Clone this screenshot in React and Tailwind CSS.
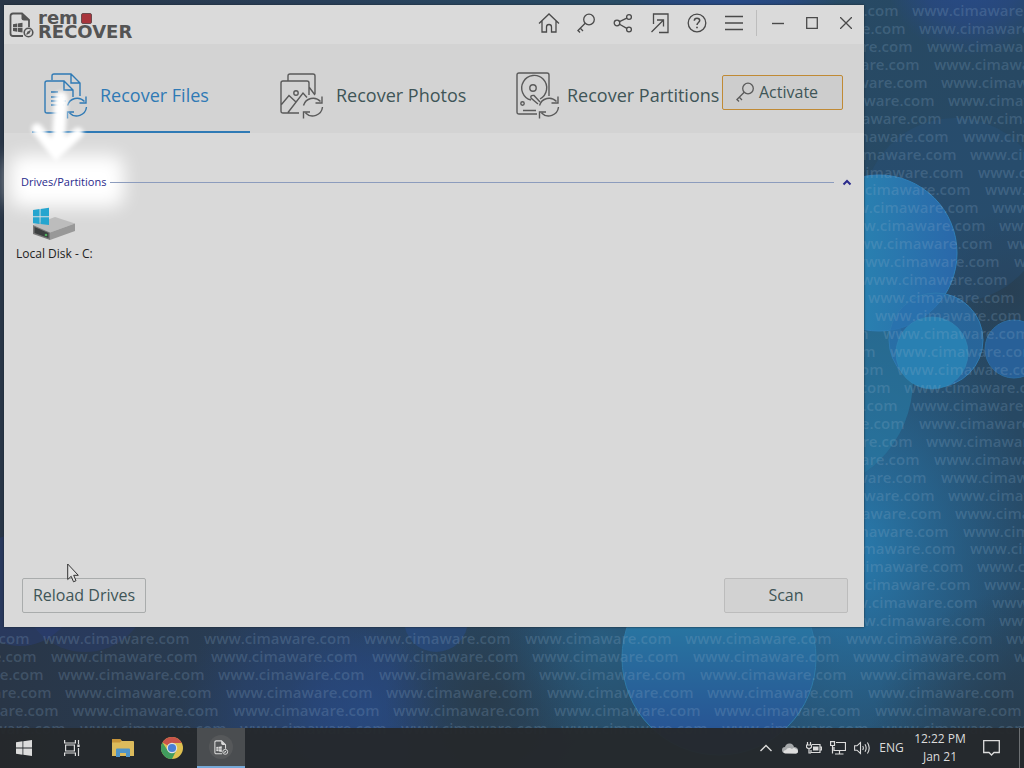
import React from 'react';

const ROW_COUNT = 41;
const MARK_GAP = 160.5;

// diagonal watermark rows, only where the window leaves the desktop free
const marks = [];
for (let row = 0; row < ROW_COUNT; row++) {
    const y = 16 + row * 18 - Math.round(row / 20);
    const shift = (912 + row * 7.28) % MARK_GAP;
    for (let i = -1; i < 7; i++) {
        const x = Math.round(shift + i * MARK_GAP);
        if (x > 1020 || x + 147 < 0) continue;
        if (y > 632 || x + 147 > 868) marks.push({ x, y });
    }
}

function Wallpaper() {
    return (
        <svg
            className="absolute inset-0 h-full w-full"
            viewBox="0 0 1024 768"
            preserveAspectRatio="xMidYMid slice"
            aria-hidden="true"
        >
            <defs>
                <linearGradient id="base" x1="0" y1="0" x2="1" y2="0">
                    <stop offset="0" stopColor="#293647" />
                    <stop offset="0.3" stopColor="#283e58" />
                    <stop offset="0.6" stopColor="#284c66" />
                    <stop offset="1" stopColor="#274863" />
                </linearGradient>
                <radialGradient id="glow">
                    <stop offset="0" stopColor="#287db0" />
                    <stop offset="1" stopColor="#2870a8" stopOpacity="0" />
                </radialGradient>
                <radialGradient id="blue">
                    <stop offset="0" stopColor="#284c8c" />
                    <stop offset="0.6" stopColor="#284885" stopOpacity="0.7" />
                    <stop offset="1" stopColor="#284885" stopOpacity="0" />
                </radialGradient>
                <radialGradient id="dark">
                    <stop offset="0" stopColor="#293c4d" />
                    <stop offset="1" stopColor="#293c4d" stopOpacity="0" />
                </radialGradient>
                <linearGradient id="ball" x1="0" y1="0" x2="1" y2="0">
                    <stop offset="0.4" stopColor="#2980b0" />
                    <stop offset="1" stopColor="#2a68aa" />
                </linearGradient>
                <linearGradient id="bottomBall" x1="0" y1="0" x2="0" y2="1">
                    <stop offset="0.3" stopColor="#2877a2" />
                    <stop offset="0.85" stopColor="#285694" />
                </linearGradient>
            </defs>
            <rect width="1024" height="768" fill="url(#base)" />
            <ellipse cx="850" cy="550" rx="190" ry="250" fill="url(#glow)" />
            <circle cx="330" cy="720" r="150" fill="url(#blue)" opacity="0.5" />
            <circle cx="365" cy="710" r="80" fill="url(#blue)" opacity="0.5" />
            <circle cx="485" cy="700" r="100" fill="url(#dark)" />
            <circle cx="600" cy="640" r="110" fill="url(#glow)" opacity="0.35" />
            <circle cx="1020" cy="740" r="150" fill="url(#dark)" />
            <circle cx="1010" cy="290" r="80" fill="url(#dark)" opacity="0.7" />
            <circle cx="970" cy="-30" r="86" fill="url(#blue)" />
            <circle cx="730" cy="-20" r="110" fill="url(#blue)" />
            <circle cx="20" cy="590" r="56" fill="#2a3e80" opacity="0.4" />
            <circle cx="85" cy="588" r="64" fill="#2a3e80" opacity="0.3" />
            <circle cx="436" cy="620" r="32" fill="#274d8e" opacity="0.5" />
            <circle cx="955" cy="210" r="92" fill="#275987" opacity="0.25" />
            <circle cx="800" cy="380" r="113" fill="#28769f" opacity="0.7" />
            <circle cx="879" cy="253" r="78" fill="url(#ball)" stroke="#2f7fb8" />
            <circle cx="936" cy="340" r="47" fill="#2a70ae" fillOpacity="0.75" stroke="#2f7ab0" />
            <circle cx="932" cy="353" r="36" fill="#2980b2" stroke="#3288b8" strokeOpacity="0.6" />
            <circle cx="1014" cy="349" r="29" fill="#286098" stroke="#2c6b9f" />
            <circle cx="719" cy="658" r="97" fill="url(#bottomBall)" stroke="#2e7aa8" />
            <g
                className="font-['Open_Sans',sans-serif] text-[15px] font-semibold"
                fill="#8fb0cc"
                fillOpacity="0.24"
            >
                {marks.map((m) => (
                    <text key={`${m.x}-${m.y}`} x={m.x} y={m.y}>www.cimaware.com</text>
                ))}
            </g>
        </svg>
    );
}

function Svg({ w, h, className = '', children, ...rest }) {
    return (
        <svg
            width={w}
            height={h}
            viewBox={`0 0 ${w} ${h}`}
            fill="none"
            stroke="currentColor"
            className={`shrink-0 ${className}`}
            aria-hidden="true"
            {...rest}
        >
            {children}
        </svg>
    );
}

// file with windows flag and a small disc, used in the logo and the taskbar
function AppMark({ size, className }) {
    return (
        <svg width={size} height={size} viewBox="0 0 26 26" fill="none" className={className} aria-hidden="true">
            <path d="M14 24H4Q1.500 24 1.500 21.500V4Q1.500 1.500 4 1.500H13L20 8V15" stroke="currentColor" strokeWidth="1.800" />
            <path d="M12.500 1.500V6.500Q12.500 8.500 15 8.500H20Z" fill="currentColor" />
            <path d="M4 12.300L8 11.600V15.300H4ZM8.700 11.500L13.500 10.700V15.300H8.700ZM4 16H8V19.700L4 19ZM8.700 16H13.500V20.600L8.700 19.800Z" fill="currentColor" />
            <circle cx="19.500" cy="20.500" r="4.300" stroke="currentColor" strokeWidth="1.600" />
            <circle cx="19.500" cy="20.500" r="1.300" fill="currentColor" />
            <path d="M17.500 22.500L21.500 18.500" stroke="currentColor" strokeWidth="1.300" />
        </svg>
    );
}

function Logo() {
    return (
        <div className="flex items-center gap-[3px] text-[#545454]">
            <AppMark size={26} />
            <div className="font-['DejaVu_Sans',sans-serif] font-bold">
                <div className="flex items-end gap-[3px]">
                    <span className="text-[18px] leading-[13px]">rem</span>
                    <span className="h-[11px] w-[11px] rounded-xs border border-[#6b4a4d] bg-[#a8343c]" />
                </div>
                <div className="text-[18px] leading-[15px]">RECOVER</div>
            </div>
        </div>
    );
}

function KeyIcon({ className }) {
    return (
        <Svg w={20} h={20} className={className} strokeWidth="1.300">
            <circle cx="13" cy="6.500" r="5.300" />
            <path d="M9.200 10.300L1.500 18M4.300 15.300L7 18M2 17.500L4 19.500" />
        </Svg>
    );
}

const tools = [
    {
        label: 'Home',
        icon: (
            <Svg w={22} h={20} strokeWidth="1.300">
                <path d="M1 10.500L11 1L21 10.500M4 8V19H8.500V14Q8.500 11.500 11 11.500T13.500 14V19H18V8" />
            </Svg>
        ),
    },
    { label: 'License key', icon: <KeyIcon /> },
    {
        label: 'Share',
        icon: (
            <Svg w={20} h={20} strokeWidth="1.300">
                <circle cx="4" cy="10" r="2.800" />
                <circle cx="16" cy="4" r="2.400" />
                <circle cx="16" cy="16.500" r="2.400" />
                <path d="M6.500 8.700L13.800 5.100M6.500 11.300L13.800 15.400" />
            </Svg>
        ),
    },
    {
        label: 'Export',
        icon: (
            <Svg w={20} h={22} strokeWidth="1.300">
                <path d="M3.500 12V2H18V20.500H9M1.500 20L13.500 8M7 8H13.500V14.500" />
            </Svg>
        ),
    },
    {
        label: 'Help',
        icon: (
            <Svg w={20} h={20} strokeWidth="1.300">
                <circle cx="10" cy="10" r="8.800" />
                <path d="M7.300 7.800Q7.300 5.200 10 5.200T12.700 7.600C12.700 9.500 10 9.600 10 12" strokeWidth="1.500" />
                <path d="M10 13.700V15.300" strokeWidth="1.700" />
            </Svg>
        ),
    },
    {
        label: 'Menu',
        icon: (
            <Svg w={18} h={16} strokeWidth="1.300">
                <path d="M0 1.500H18M0 8H18M0 14.500H18" />
            </Svg>
        ),
    },
];

const windowButtons = [
    { label: 'Minimize', icon: <Svg w={12} h={12} strokeWidth="1.400"><path d="M0 6.500H12" /></Svg> },
    { label: 'Maximize', icon: <Svg w={12} h={12} strokeWidth="1.300"><path d="M.700 .700H11.300V11.300H.700Z" /></Svg> },
    { label: 'Close', icon: <Svg w={12} h={12} strokeWidth="1.300"><path d="M0 0L12 12M12 0L0 12" /></Svg> },
];

function TitleBar() {
    return (
        <header className="flex h-[39px] items-start justify-between bg-[#dadada] pr-px pl-[5px] text-[#4a4a4a]">
            <div className="pt-[6px]">
                <Logo />
            </div>
            <div className="flex items-center">
                {tools.map((t) => (
                    <button key={t.label} type="button" aria-label={t.label} className="flex h-9 w-[37px] items-center justify-center">
                        {t.icon}
                    </button>
                ))}
                <span className="mx-1 h-[26px] w-px bg-[#bdbdbd]" />
                {windowButtons.map((b) => (
                    <button key={b.label} type="button" aria-label={b.label} className="flex h-9 w-[34px] items-center justify-center">
                        {b.icon}
                    </button>
                ))}
            </div>
        </header>
    );
}

// two round arrows shared by the three tab icons
function Refresh() {
    return (
        <path d="M23.500 33.500A10 10 0 0 1 40.500 29.500M42 24.500V31H35.500M42.500 35A10 10 0 0 1 25.500 41M23.500 46.500V40H30" />
    );
}

function FilesIcon() {
    return (
        <Svg w={44} h={48} strokeWidth="1.400">
            <path d="M8 8V4Q8 2 10 2H27L36 11V24M27 2V11H36M18 41H3Q1 41 1 39V11Q1 9 3 9H20L29 18V25M20 9V18H29M7 20H14M7 25H19M7 29H22M7 33H20" />
            <Refresh />
        </Svg>
    );
}

function PhotosIcon() {
    return (
        <Svg w={44} h={48} strokeWidth="1.400">
            <path d="M8 9V4Q8 2 10 2H33Q35 2 35 4V22M29 15L35 23M19 41H3Q1 41 1 39V11Q1 9 3 9H27Q29 9 29 11V23M1 33L9 23.500L16 30M8 40.500L23 21L27 25.500" />
            <circle cx="16" cy="21" r="2.200" />
            <Refresh />
        </Svg>
    );
}

function DriveIcon() {
    return (
        <Svg w={44} h={48} strokeWidth="1.400">
            <path d="M21 42H3Q1 42 1 40V3Q1 1 3 1H31Q33 1 33 3V24M7 38.500H20" />
            <path d="M15 28A12.500 12.500 0 1 1 24 27M22 32L15 26Q14 23 18 23.500L24 30" />
            <circle cx="17" cy="16" r="3.200" />
            <circle cx="6.500" cy="31.500" r="1.700" />
            <Refresh />
        </Svg>
    );
}

function Tab({ icon, label, active, compact }) {
    return (
        <button
            type="button"
            role="tab"
            aria-selected={active}
            className={`flex h-[89px] items-center border-b-2 pt-4 pl-3 text-left text-[18px] whitespace-nowrap ${
                active ? 'border-[#2f7ab5] text-[#2f7ab5]' : 'border-transparent text-[#3f5557]'
            } ${compact ? 'gap-[7px]' : 'min-w-[218px] gap-3'}`}
        >
            <span className={active ? 'text-[#2f7ab5]' : 'text-[#5a5a5a]'}>{icon}</span>
            {label}
        </button>
    );
}

function Tabs() {
    return (
        <div className="flex items-start justify-between bg-[#d3d3d3] pr-[21px] pl-7">
            <div role="tablist" className="flex gap-[18px]">
                <Tab icon={<FilesIcon />} label="Recover Files" active />
                <Tab icon={<PhotosIcon />} label="Recover Photos" active={false} />
                <Tab icon={<DriveIcon />} label="Recover Partitions" active={false} compact />
            </div>
            <button
                type="button"
                className="mt-[31px] flex h-[35px] w-[121px] shrink-0 items-center gap-1 rounded-xs border border-[#c08a35] bg-[#cdcdcd] pb-px pl-3 text-[16px] font-medium text-[#3f5557]"
            >
                <KeyIcon className="text-[#5a5a5a]" />
                Activate
            </button>
        </div>
    );
}

function DriveArt() {
    return (
        <svg width="44" height="34" viewBox="0 0 44 34" aria-hidden="true">
            <path d="M1 18L23 10L43 16.500L18 25.500Z" fill="#bcbcbc" />
            <path d="M18 25.500L43 16.500V24L18 33Z" fill="#989898" />
            <path d="M1 18L18 25.500V33L1 27Z" fill="#777" />
            <path d="M2.500 20L16.500 26V31L2.500 26Z" fill="#3c3f40" />
            <circle cx="14" cy="28" r="1.300" fill="#4fae5c" />
            <path d="M1 3L7.600 2V9.300H1ZM8.500 1.900L17 .700V9.300H8.500ZM1 10.200H7.600V17L1 16.200ZM8.500 10.200H17V18L8.500 17Z" fill="#25a5cf" />
        </svg>
    );
}

// white arrow and halo that point at the drive list
function Callout() {
    return (
        <>
            <span className="absolute top-[150px] left-[6px] h-[52px] w-[114px] rounded-xl bg-white blur-[9px]" />
            <svg className="absolute top-[80px] left-[20px] overflow-visible blur-[2px]" width="60" height="84" viewBox="0 0 60 84" aria-hidden="true">
                <path d="M37 13L34 62" fill="none" stroke="#fff" strokeWidth="13" strokeLinecap="round" />
                <path d="M13 44L32 68L54 48" fill="none" stroke="#fff" strokeWidth="11" strokeLinecap="round" strokeLinejoin="round" />
                <path d="M18 52L32 77L48 54Z" fill="#fff" />
            </svg>
        </>
    );
}

function RecoverWindow() {
    return (
        <main className="relative flex flex-1 flex-col bg-[#d9d9d9] shadow-[0_0_2px_#1b2830]">
            <TitleBar />
            <Tabs />
            <Callout />
            <section className="relative flex-1 pt-10">
                <button type="button" aria-expanded="true" className="flex w-full items-center gap-1 pr-3 pl-[17px] text-[11px] leading-[18px] text-[#2a2a8c]">
                    Drives/Partitions
                    <span className="mr-1 h-px flex-1 bg-[#8c9cbd]" />
                    <Svg w={10} h={8} strokeWidth="2"><path d="M1.500 6.500L5 3L8.500 6.500" /></Svg>
                </button>
                <button type="button" className="mt-4 ml-3 flex flex-col gap-1 text-[12px] leading-[18px] text-[#222]">
                    <span className="ml-4"><DriveArt /></span>
                    Local Disk - C:
                </button>
            </section>
            <div className="flex justify-between pr-4 pb-[14px] pl-[18px] text-[16px] font-medium text-[#3f5557]">
                <button type="button" className="h-[35px] w-[124px] rounded-xs border border-[#a9acac] pb-px">Reload Drives</button>
                <button type="button" className="h-[35px] w-[124px] rounded-xs border border-[#bcbcbc] bg-[#d2d2d2] pb-px">Scan</button>
            </div>
            <svg className="absolute bottom-[44px] left-[63px]" width="12" height="20" viewBox="0 0 12 20" aria-hidden="true">
                <path d="M.700 1V16.500L4.200 13.300L6.500 18.800L9 17.700L6.700 12.300H11.300Z" fill="#e2e2e2" stroke="#333" />
            </svg>
        </main>
    );
}

const apps = [
    {
        label: 'File Explorer',
        icon: (
            <svg width="22" height="20" viewBox="0 0 22 20" aria-hidden="true">
                <path d="M0 2Q0 1 1 1H8L10 3H21Q22 3 22 4V18H0Z" fill="#dcbb5c" />
                <path d="M0 1H8L9.500 3L8 4.500H0Z" fill="#c7953a" />
                <path d="M4 19V11.500Q4 10.500 5 10.500H17Q18 10.500 18 11.500V19H14V15H8V19Z" fill="#4f94c8" />
            </svg>
        ),
    },
    {
        label: 'Chrome',
        icon: (
            <svg width="22" height="22" viewBox="0 0 22 22" aria-hidden="true">
                <circle cx="11" cy="11" r="11" fill="#dfc050" />
                <path d="M11 11L1.470 5.500A11 11 0 0 1 20.530 5.500L20.800 6H11Z" fill="#c9544a" />
                <path d="M1.470 5.500A11 11 0 0 0 11 22L15.300 13.500L11 11L6.700 13.500Z" fill="#419c5e" />
                <circle cx="11" cy="11" r="5.200" fill="#e2e2e2" />
                <circle cx="11" cy="11" r="4.100" fill="#4a7fd6" />
            </svg>
        ),
    },
];

const tray = [
    {
        label: 'Show hidden icons',
        icon: <Svg w={12} h={8} strokeWidth="1.400"><path d="M.500 7L6 1.500L11.500 7" /></Svg>,
    },
    {
        label: 'OneDrive',
        icon: (
            <svg width="16" height="11" viewBox="0 0 16 11" aria-hidden="true">
                <path d="M3 10Q0 10 0 7T3 4Q4 0 8 .500Q11 .500 12 4Q16 4 16 7.500T13 10.500Z" fill="#a5a8aa" />
                <path d="M3 10.500Q1 10 1.500 8.500T4 7Q5 4.500 8 5L10 6Q12 4 14 6Q16 6 16 8.500T13 10.500Z" fill="#dedede" />
            </svg>
        ),
    },
    {
        label: 'Battery',
        icon: (
            <Svg w={16} h={12} strokeWidth="1.200">
                <path d="M6 2.500H14V10.500H5V8M14.500 5H15.500V8H14.500M1.500 0V3M4.500 0V3M.500 3H5.500V5Q5 6.500 3 6.500T.500 5ZM3 6.500V11H5" />
                <path d="M7 4.500H12.500V8.500H7Z" fill="currentColor" stroke="none" />
            </Svg>
        ),
    },
    {
        label: 'Network',
        icon: (
            <Svg w={16} h={14} strokeWidth="1.200">
                <path d="M6 1.500H15.500V9.500H4V6M9.500 9.500V13M5 13H13.500M.600 .600H4.500V4.500H.600ZM2.500 4.500V12.500" />
            </Svg>
        ),
    },
    {
        label: 'Volume',
        icon: (
            <Svg w={17} h={14} strokeWidth="1.100">
                <path d="M.600 4.800H3L6.500 1.500V12.500L3 9.200H.600ZM8.700 5Q10 7 8.700 9M11 3.300Q13.300 7 11 10.700M13.400 1.500Q17 7 13.400 12.500" />
            </Svg>
        ),
    },
];

function Taskbar() {
    return (
        <footer className="relative flex h-10 items-stretch justify-between bg-[#25282b]/95 text-[12px] text-[#dcdcdc]">
            <nav className="flex" aria-label="Taskbar">
                <button type="button" aria-label="Start" className="flex w-12 items-center justify-center">
                    <svg width="16" height="16" viewBox="0 0 16 16" fill="currentColor" aria-hidden="true">
                        <path d="M0 2.200L6.500 1.300V7.600H0ZM7.300 1.200L16 0V7.600H7.300ZM0 8.400H6.500V14.700L0 13.800ZM7.300 8.400H16V16L7.300 14.800Z" />
                    </svg>
                </button>
                <button type="button" aria-label="Task View" className="flex w-12 items-center justify-center">
                    <Svg w={16} h={16} strokeWidth="1.200">
                        <path d="M.600 0V3H11.400V0M1.600 5H10.400V11H1.600ZM.600 16V13H11.400V16M14.500 0V4M14.500 8V16" />
                        <path d="M13.300 4.500H15.700V7H13.300Z" fill="currentColor" stroke="none" />
                    </Svg>
                </button>
                <div className="ml-[3px] flex gap-px">
                    {apps.map((a) => (
                        <button key={a.label} type="button" aria-label={a.label} className="flex w-12 items-center justify-center">
                            {a.icon}
                        </button>
                    ))}
                    <button type="button" aria-label="Remo Recover" className="flex w-12 items-center justify-center border-b-2 border-[#76a9d8] bg-[#4a4d50]">
                        <span className="flex h-6 w-6 items-center justify-center rounded-full bg-[#56585a]">
                            <AppMark size={15} />
                        </span>
                    </button>
                </div>
            </nav>
            <div className="flex items-stretch">
                {tray.map((t) => (
                    <button key={t.label} type="button" aria-label={t.label} className="flex w-6 items-center justify-center">
                        {t.icon}
                    </button>
                ))}
                <button type="button" className="mr-1 w-[35px] text-center">ENG</button>
                <button type="button" className="w-[54px] text-center leading-[18px] whitespace-nowrap">
                    12:22 PM
                    <br />
                    Jan 21
                </button>
                <button type="button" aria-label="Notifications" className="mr-1 flex w-12 items-center justify-center">
                    <Svg w={17} h={16} strokeWidth="1.300">
                        <path d="M.700 .700H16.300V12.500H11L8.500 15L6 12.500H.700Z" />
                    </Svg>
                </button>
                <button type="button" aria-label="Show desktop" className="w-[5px] border-l border-[#6d7073]" />
            </div>
        </footer>
    );
}

export default function App() {
    return (
        <div className="relative flex min-h-screen flex-col overflow-hidden bg-[#28425f] font-['Open_Sans','Noto_Sans',sans-serif]">
            <Wallpaper />
            <div className="relative flex flex-1 flex-col pt-[5px] pr-40 pb-[101px] pl-1">
                <RecoverWindow />
            </div>
            <Taskbar />
        </div>
    );
}
